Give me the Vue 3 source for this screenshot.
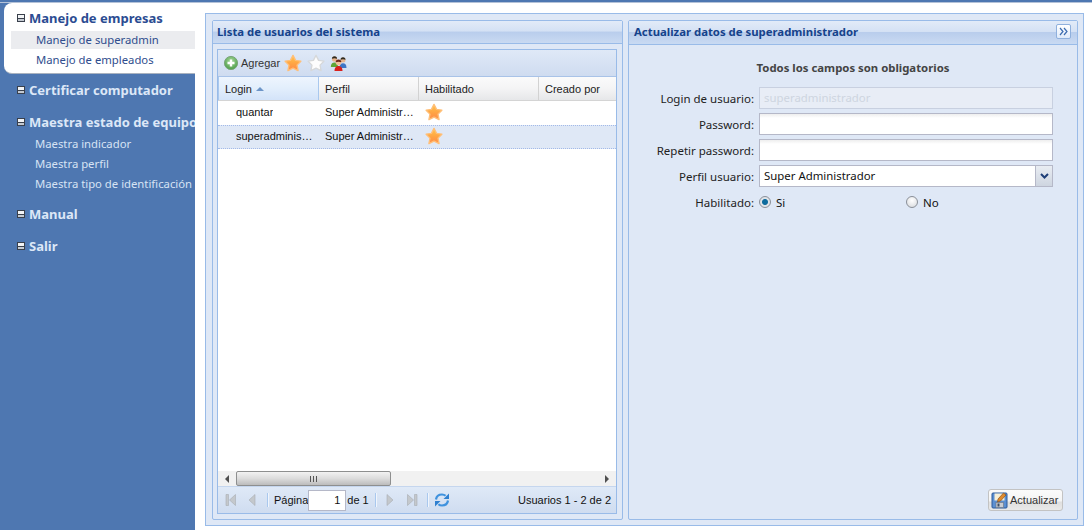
<script setup>
const groups = [
  { title: 'Certificar computador', items: [] },
  { title: 'Maestra estado de equipos', items: ['Maestra indicador', 'Maestra perfil', 'Maestra tipo de identificación'] },
  { title: 'Manual', items: [] },
  { title: 'Salir', items: [] }
]
const rows = [
  { login: 'quantar', perfil: 'Super Administrador', selected: false },
  { login: 'superadministrador', perfil: 'Super Administrador', selected: true }
]
const starPts = '8,1.2 10.300,5.700 15,6.400 11.600,9.900 12.500,14.800 8,12.500 3.500,14.800 4.400,9.900 1,6.400 5.700,5.700'
</script>

<template>
  <div class="page">
    <div class="topbar"></div>
    <div class="shell">
      <aside class="sidebar">
        <section class="tab">
          <h3 class="ghead active"><span class="box"></span>Manejo de empresas</h3>
          <a class="tabitem current">Manejo de superadmin</a>
          <a class="tabitem">Manejo de empleados</a>
        </section>
        <section v-for="g in groups" :key="g.title" class="group">
          <h3 class="ghead"><span class="box"></span>{{ g.title }}</h3>
          <ul v-if="g.items.length" class="glist">
            <li v-for="i in g.items" :key="i">{{ i }}</li>
          </ul>
        </section>
      </aside>

      <main class="main">
        <div class="outer">
          <section class="panel left">
            <header class="phead"><span>Lista de usuarios del sistema</span></header>
            <div class="pbody">
              <div class="grid">
                <div class="toolbar">
                  <svg class="ic" width="16" height="16" viewBox="0 0 16 16">
                    <defs>
                      <radialGradient id="gr" cx="50%" cy="35%" r="65%"><stop offset="0" stop-color="#a5d89a"/><stop offset="1" stop-color="#4f9e4a"/></radialGradient>
                    </defs>
                    <circle cx="8" cy="8" r="6.600" fill="url(#gr)" stroke="#7ba67c"/>
                    <path d="M8 4.500v7M4.500 8h7" stroke="#fff" stroke-width="2.400"/>
                  </svg>
                  <span class="tbtext">Agregar</span>
                  <svg class="star s1" width="18" height="18" viewBox="0 0 16 16"><defs><linearGradient id="st" x1="0" y1="0" x2="0" y2="1"><stop offset="0" stop-color="#ffc64a"/><stop offset=".6" stop-color="#ffa043"/><stop offset="1" stop-color="#ff8a4a"/></linearGradient></defs><polygon :points="starPts" fill="url(#st)" stroke="#ffbf78" stroke-width="1.200" stroke-linejoin="round"/></svg>
                  <svg class="star s2" width="18" height="18" viewBox="0 0 16 16"><polygon :points="starPts" fill="#fdfdfd" stroke="#d6d8da" stroke-width="1.200" stroke-linejoin="round"/></svg>
                  <svg class="users" width="17" height="16" viewBox="0 0 17 16">
                    <circle cx="4.500" cy="4" r="2.600" fill="#e8b48c"/>
                    <path d="M1.900 3.800a2.600 2.600 0 0 1 5.200 0c-1.500-.8-3.700-.8-5.200 0z" fill="#2e2a20"/>
                    <path d="M.8 12c0-3.200 1.600-4.600 3.700-4.600S8 8.800 8 12z" fill="#5ea638"/>
                    <circle cx="13" cy="5" r="2.500" fill="#e8b48c"/>
                    <path d="M10.500 4.800a2.500 2.500 0 0 1 5 0c-1.500-.8-3.500-.8-5 0z" fill="#2e2a20"/>
                    <path d="M9.500 13c0-3.300 1.500-4.700 3.500-4.700s3.500 1.400 3.500 4.700z" fill="#3f76c6"/>
                    <circle cx="8.500" cy="7.500" r="2.800" fill="#f0c09a"/>
                    <path d="M5.700 7.300a2.800 2.800 0 0 1 5.600 0c-1.600-.9-4-.9-5.600 0z" fill="#6b2a1a"/>
                    <path d="M4.500 16c0-3.600 1.800-5 4-5s4 1.400 4 5z" fill="#d9201c"/>
                  </svg>
                </div>
                <div class="ghrow">
                  <div class="gh c1 sorted">Login<i class="sort"></i></div>
                  <div class="gh c2">Perfil</div>
                  <div class="gh c3">Habilitado</div>
                  <div class="gh c4">Creado por</div>
                </div>
                <div class="gbody">
                  <div v-for="r in rows" :key="r.login" class="grow" :class="{ sel: r.selected }">
                    <div class="gc c1 loginc"><span>{{ r.login }}</span></div>
                    <div class="gc c2"><span>{{ r.perfil }}</span></div>
                    <div class="gc c3">
                      <svg width="18" height="18" viewBox="0 0 16 16"><polygon :points="starPts" fill="url(#st)" stroke="#ffbf78" stroke-width="1.200" stroke-linejoin="round"/></svg>
                    </div>
                    <div class="gc c4"></div>
                  </div>
                </div>
                <div class="hscroll">
                  <i class="arr al"></i>
                  <div class="track"><div class="thumb"><span class="grip"></span></div></div>
                  <i class="arr ar"></i>
                </div>
                <div class="paging">
                  <svg class="pi first" width="16" height="16" viewBox="0 0 16 16"><path d="M3 2.500h2.500v11H3z" fill="#c4c8cc" stroke="#a8adb2" stroke-width=".6"/><path d="M12.500 2.500v11L6.500 8z" fill="#c4c8cc" stroke="#a8adb2" stroke-width=".6"/></svg>
                  <svg class="pi prev" width="16" height="16" viewBox="0 0 16 16"><path d="M11 2.500v11L5 8z" fill="#c4c8cc" stroke="#a8adb2" stroke-width=".6"/></svg>
                  <i class="sep s-a"></i>
                  <span class="pt">Página</span>
                  <span class="pinput">1</span>
                  <span class="pt de">de 1</span>
                  <i class="sep s-b"></i>
                  <svg class="pi next" width="16" height="16" viewBox="0 0 16 16"><path d="M5 2.500v11L11 8z" fill="#c4c8cc" stroke="#a8adb2" stroke-width=".6"/></svg>
                  <svg class="pi last" width="16" height="16" viewBox="0 0 16 16"><path d="M3.500 2.500v11L9.500 8z" fill="#c4c8cc" stroke="#a8adb2" stroke-width=".6"/><path d="M10.500 2.500H13v11h-2.500z" fill="#c4c8cc" stroke="#a8adb2" stroke-width=".6"/></svg>
                  <i class="sep s-c"></i>
                  <svg class="pi refresh" width="16" height="16" viewBox="0 0 16 16" fill="none">
                    <path d="M2 7.500C2.500 4 5 2.500 8 2.500c1.500 0 2.700.5 3.600 1.300" stroke="#3f92de" stroke-width="2.200"/>
                    <path d="M15 1.500V7H9.500z" fill="#2f80d0"/>
                    <path d="M14 8.500c-.5 3.500-3 5-6 5-1.500 0-2.700-.5-3.600-1.300" stroke="#3f92de" stroke-width="2.200"/>
                    <path d="M1 14.500V9h5.500z" fill="#2f80d0"/>
                  </svg>
                  <span class="pinfo">Usuarios 1 - 2 de 2</span>
                </div>
              </div>
            </div>
          </section>

          <section class="panel right">
            <header class="phead rh">
              <span>Actualizar datos de superadministrador</span>
              <button class="collapse">
                <svg width="9" height="9" viewBox="0 0 9 9" fill="none" stroke="#3c6cb0" stroke-width="1.200"><path d="M1 1l3 3.500-3 3.500M5 1l3 3.500-3 3.500"/></svg>
              </button>
            </header>
            <div class="fbody">
              <p class="req">Todos los campos son obligatorios</p>
              <div class="frow"><label>Login de usuario:</label><div class="inp dis">superadministrador</div></div>
              <div class="frow"><label>Password:</label><div class="inp"></div></div>
              <div class="frow"><label>Repetir password:</label><div class="inp"></div></div>
              <div class="frow">
                <label>Perfil usuario:</label>
                <div class="inp combo">
                  <span>Super Administrador</span>
                  <i class="trig"><svg width="9" height="6" viewBox="0 0 9 6" fill="none"><path d="M1 1l3.500 3.500L8 1" stroke="#1f3f78" stroke-width="2"/></svg></i>
                </div>
              </div>
              <div class="frow radios">
                <label>Habilitado:</label>
                <div class="rg g1"><i class="radio on"></i><span>Si</span></div>
                <div class="rg g2"><i class="radio"></i><span>No</span></div>
              </div>
              <div class="spacer"></div>
              <div class="actions">
                <button class="save">
                  <svg width="18" height="18" viewBox="0 0 18 18">
                    <rect x="1" y="2" width="15" height="15" rx="1" fill="#5b8fd2" stroke="#2d5a9a"/>
                    <rect x="3.500" y="2.500" width="10" height="7" fill="#f6efd8"/>
                    <rect x="5" y="11.500" width="7.500" height="5" fill="#c8ccd2" stroke="#6a7482" stroke-width=".6"/>
                    <rect x="6.500" y="12.500" width="2" height="3" fill="#3f4d62"/>
                    <path d="M7 8l5.500-6 2.500 2-5.500 6-3 1z" fill="#e08a2c" stroke="#7a4510" stroke-width=".6"/>
                  </svg>
                  <span>Actualizar</span>
                </button>
              </div>
            </div>
          </section>
        </div>
      </main>
    </div>
  </div>
</template>

<style>
html, body { margin: 0; background: #fff; }
</style>

<style scoped>
.page {
  display: flex;
  flex-direction: column;
  width: 1092px;
  height: 530px;
  overflow: hidden;
  background: #fff;
  font-family: "Noto Sans", "Liberation Sans", sans-serif;
  color: #111;
}
h3, p, ul { margin: 0; padding: 0; }
.topbar { height: 2px; flex: none; background: #4e77b1; border-bottom: 1px solid #b4c2d8; }
.shell { flex: 1; min-height: 0; display: flex; }

/* sidebar */
.sidebar {
  width: 195px;
  flex: none;
  background: #4e77b1;
  box-sizing: border-box;
  overflow: hidden;
}
.tab {
  margin-left: 4px;
  height: 71px;
  box-sizing: border-box;
  background: #fff;
  border-radius: 8px 0 0 8px;
  border-bottom: 1px solid #a9b2bf;
  padding-top: 5px;
}
.ghead {
  display: flex;
  align-items: center;
  height: 20px;
  font-size: 13px;
  font-weight: 700;
  color: #dce7f7;
  padding-left: 17px;
  white-space: nowrap;
}
.tab .ghead { padding-left: 13px; color: #2b4c92; }
.box {
  width: 8px;
  height: 8px;
  margin-right: 4px;
  flex: none;
  box-sizing: border-box;
  border: 1px solid #39404c;
  background: linear-gradient(#f2f4f6 0 3px, #39404c 3px 4px, #c4cad2 4px);
}
.tabitem {
  display: block;
  height: 18px;
  line-height: 18px;
  font-size: 11.300px;
  color: #2f4d8d;
  padding-left: 25px;
  margin: 2px 0 0 7px;
  white-space: nowrap;
}
.tabitem.current { background: #ebecef; margin-top: 3px; }
.group { padding: 6px 0; }
.glist { list-style: none; margin: 2px 0 -2px; }
.glist li {
  height: 20px;
  line-height: 20px;
  font-size: 11.300px;
  color: #d7e3f4;
  padding-left: 35px;
  white-space: nowrap;
}

/* main */
.main {
  flex: 1;
  min-width: 0;
  box-sizing: border-box;
  padding: 10px 8px 4px 10px;
  display: flex;
}
.outer {
  flex: 1;
  display: flex;
  gap: 5px;
  box-sizing: border-box;
  border: 1px solid #99bbe8;
  background: #dfe8f6;
  padding: 6px 5px 5px 6px;
  min-width: 0;
}
.panel {
  display: flex;
  flex-direction: column;
  box-sizing: border-box;
  border: 1px solid #99bbe8;
  border-radius: 2px;
  min-height: 0;
}
.left { width: 411px; flex: none; }
.right { flex: 1; min-width: 0; }
.phead {
  height: 23px;
  flex: none;
  display: flex;
  align-items: center;
  padding-left: 4px;
  padding-bottom: 2px;
  box-sizing: border-box;
  font-size: 11.350px;
  font-weight: 700;
  color: #15428b;
  border-bottom: 1px solid #99bbe8;
  background: linear-gradient(#e2ebf8 0, #d4e1f4 46%, #b9cdec 50%, #c9daf2 100%);
  white-space: nowrap;
}
.rh { height: 24px; justify-content: space-between; padding-left: 5px; padding-right: 6px; }
.collapse {
  width: 15px;
  height: 15px;
  padding: 0;
  display: flex;
  align-items: center;
  justify-content: center;
  background: linear-gradient(#fff, #dfeafa);
  border: 1px solid #8fb0dd;
  border-radius: 2px;
}
.pbody {
  flex: 1;
  min-height: 0;
  padding: 5px;
  padding-left: 4px;
  display: flex;
}

/* grid */
.grid {
  flex: 1;
  display: flex;
  flex-direction: column;
  border: 1px solid #99bbe8;
  background: #fff;
  min-width: 0;
  font-family: "Liberation Sans", Arial, sans-serif;
}
.toolbar {
  height: 26px;
  flex: none;
  display: flex;
  align-items: center;
  padding-left: 5px;
  background: linear-gradient(#dfe9f7, #cfdcf0);
  border-bottom: 1px solid #a9c3e8;
}
.tbtext { font-size: 11px; color: #333; margin-left: 2px; }
.star { margin-left: 4px; }
.s2 { margin-left: 5px; }
.users { margin-left: 5px; }
.ghrow {
  height: 23px;
  flex: none;
  display: flex;
  background: linear-gradient(#fbfbfb, #f4f4f5 50%, #e6e7e9);
  border-bottom: 1px solid #d4d4d4;
}
.gh {
  box-sizing: border-box;
  font-size: 11px;
  padding-left: 6px;
  border-right: 1px solid #d2d2d2;
  color: #222;
  display: flex;
  align-items: center;
}
.gh.c4 { border-right: 0; }
.c1 { width: 101px; flex: none; }
.c2 { width: 100px; flex: none; }
.c3 { width: 120px; flex: none; }
.c4 { flex: 1; min-width: 0; }
.sorted {
  background: linear-gradient(#eef5fe, #e2eefc 50%, #d3e3f9);
  border-left: 1px solid #a9c8ee;
  border-right: 1px solid #a9c8ee;
}
.sort {
  display: inline-block;
  margin-left: 4px;
  border: 4px solid transparent;
  border-top: 0;
  border-bottom: 4px solid #6d95c8;
}
.gbody { flex: 1; min-height: 0; }
.grow {
  height: 24px;
  display: flex;
  box-sizing: border-box;
  border-top: 1px dotted transparent;
  border-bottom: 1px dotted transparent;
}
.grow.sel { background: #dfe8f6; border-color: #a3bae9; }
.gc {
  box-sizing: border-box;
  font-size: 11px;
  padding: 0 5px 2px 6px;
  display: flex;
  align-items: center;
  color: #111;
}
.gc span { overflow: hidden; text-overflow: ellipsis; white-space: nowrap; }
.loginc { padding-left: 18px; }
.hscroll {
  height: 15px;
  flex: none;
  display: flex;
  align-items: center;
  background: #f1f1f1;
}
.arr { width: 18px; flex: none; display: flex; justify-content: center; }
.arr::before { content: ""; border: 4px solid transparent; }
.al::before { border-left: 0; border-right: 4px solid #505050; }
.ar::before { border-right: 0; border-left: 4px solid #505050; }
.track { flex: 1; height: 15px; }
.thumb {
  width: 155px;
  height: 15px;
  box-sizing: border-box;
  border: 1px solid #8e8f8f;
  border-radius: 2px;
  background: linear-gradient(#f2f2f2, #dcdcdc 50%, #bcbcbc);
  display: flex;
  align-items: center;
  justify-content: center;
}
.grip { width: 7px; height: 6px; background: repeating-linear-gradient(90deg, #555 0 1px, transparent 1px 3px); }
.paging {
  height: 27px;
  flex: none;
  display: flex;
  align-items: center;
  background: linear-gradient(#dfe9f7, #cfdcf0);
  border-top: 1px solid #c5d6ee;
  box-sizing: border-box;
  padding-left: 5px;
  padding-right: 5px;
}
.pi { flex: none; }
.prev { margin-left: 5px; }
.sep { width: 1px; height: 14px; flex: none; background: #a9c8ee; border-right: 1px solid #f0f5fc; }
.s-a { margin: 0 5px 0 7px; }
.s-b { margin: 0 0 0 6px; }
.s-c { margin: 0 5px 0 7px; }
.next { margin-left: 5px; }
.last { margin-left: 6px; }
.pt { font-size: 11px; color: #111; }
.de { margin-left: 1px; }
.pinput {
  width: 38px;
  height: 21px;
  box-sizing: border-box;
  border: 1px solid #b5b8c8;
  background: #fff;
  font-size: 11px;
  text-align: right;
  line-height: 19px;
  padding-right: 5px;
}
.pinfo { margin-left: auto; font-size: 11px; color: #111; }

/* form */
.fbody {
  flex: 1;
  min-height: 0;
  display: flex;
  flex-direction: column;
  padding: 15px 0 8px 0;
}
.req {
  font-size: 11.350px;
  font-weight: 700;
  color: #444;
  text-align: center;
  height: 16px;
  line-height: 16px;
  margin: 0 0 11px 0;
}
.frow {
  display: flex;
  align-items: center;
  height: 22px;
  margin-bottom: 4px;
  font-size: 11.500px;
}
.frow label {
  width: 125px;
  flex: none;
  text-align: right;
  color: #222;
  margin-right: 5px;
}
.inp {
  width: 294px;
  height: 22px;
  flex: none;
  box-sizing: border-box;
  border: 1px solid #b5b8c8;
  background: #fff linear-gradient(#eeeeee, #fff 4px);
  font-size: 11.400px;
  line-height: 20px;
  padding-left: 4px;
}
.dis { background: #e8edf6; color: #ced5e0; border-color: #c8d0e0; }
.combo {
  display: flex;
  justify-content: space-between;
  background: #fff;
}
.trig {
  width: 16px;
  display: flex;
  align-items: center;
  justify-content: center;
  border-left: 1px solid #b5b8c8;
  background: linear-gradient(#e9edf3, #ced5e0);
}
.rg { display: flex; align-items: center; gap: 5px; }
.g1 { width: 147px; }
.radio {
  width: 12px;
  height: 12px;
  box-sizing: border-box;
  border-radius: 50%;
  border: 1px solid #8a8f98;
  background: radial-gradient(circle at 50% 35%, #fff, #d5d7db);
  display: block;
}
.radio.on { background: radial-gradient(circle, #0d6b9e 0 2.500px, #dfe3e8 3.500px); }
.spacer { flex: 1; }
.actions { display: flex; justify-content: flex-end; padding-right: 14px; }
.save {
  width: 75px;
  height: 22px;
  padding: 0 0 0 2px;
  display: flex;
  align-items: center;
  gap: 1px;
  border: 1px solid #c3c3c3;
  border-radius: 3px;
  background: linear-gradient(#fbfbfb 0, #f4f4f4 55%, #dfdfdf 60%, #e9e9e9);
  font: 11px "Liberation Sans", sans-serif;
  color: #333;
}
</style>
